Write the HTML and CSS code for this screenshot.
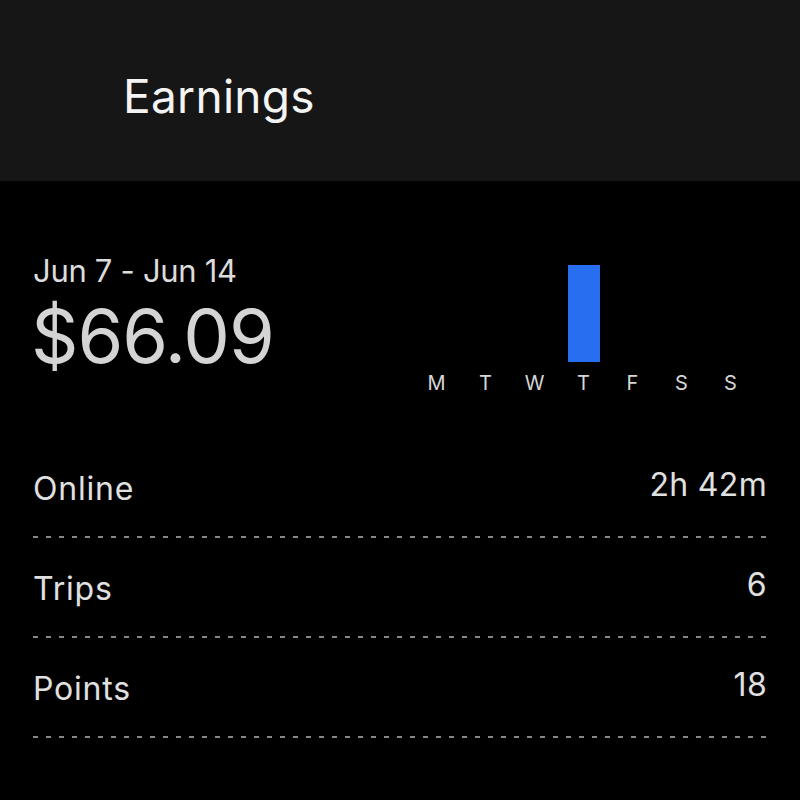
FILE: index.html
```html
<!DOCTYPE html>
<html lang="en">
<head>
  <meta charset="UTF-8" />
  <meta name="viewport" content="width=device-width, initial-scale=1.0"/>
  <title>Earnings</title>
  <link rel="stylesheet" href="styles.css">
</head>
<body>

<header class="top-bar">
  <h1>Earnings</h1>
</header>

<section class="summary">
  <div class="totals">
    <div class="range">Jun 7 - Jun 14</div>
    <div class="amount">$66.09</div>
  </div>

  <div class="week-chart">
    <div class="day"><div class="bar-slot"></div><span>M</span></div>
    <div class="day"><div class="bar-slot"></div><span>T</span></div>
    <div class="day"><div class="bar-slot"></div><span>W</span></div>
    <div class="day"><div class="bar-slot"><div class="bar" style="height: 97px"></div></div><span>T</span></div>
    <div class="day"><div class="bar-slot"></div><span>F</span></div>
    <div class="day"><div class="bar-slot"></div><span>S</span></div>
    <div class="day"><div class="bar-slot"></div><span>S</span></div>
  </div>
</section>

<ul class="stats">
  <li><span>Online</span><span class="value">2h 42m</span></li>
  <li><span>Trips</span><span class="value">6</span></li>
  <li><span>Points</span><span class="value">18</span></li>
</ul>

</body>
</html>
```

FILE: styles.css
```css
* { box-sizing: border-box; }

body {
  margin: 0;
  background: #000;
  color: #e2e2e2;
  font-family: Inter, "Open Sans", sans-serif;
}

.top-bar {
  height: 181px;
  background: #161616;
  display: flex;
  align-items: center;
  padding: 10px 0 0 123px;
}

.top-bar h1 {
  margin: 0;
  font-size: 46px;
  font-weight: 400;
  letter-spacing: 0.3px;
  color: #f4f4f4;
}

.summary {
  display: flex;
  justify-content: space-between;
  padding: 72px 45px 0 33px;
  height: 257px;
}

.range {
  font-size: 31px;
  line-height: 36px;
  letter-spacing: -0.3px;
  color: #dcdcdc;
}

.amount {
  font-size: 74px;
  line-height: 74px;
  letter-spacing: -1px;
  color: #d4d4d4;
  margin: 10px 0 0 -2px;
}

.week-chart {
  display: flex;
  padding-top: 12px;
}

.day {
  width: 49px;
  display: flex;
  flex-direction: column;
  align-items: center;
}

.bar-slot {
  height: 97px;
  width: 32px;
  display: flex;
  align-items: flex-end;
}

.bar {
  width: 32px;
  background: #276ef1;
}

.day span {
  margin-top: 9px;
  font-size: 20px;
  color: #d6d6d6;
}

.stats {
  list-style: none;
  margin: 0;
  padding: 0 33px;
}

.stats li {
  height: 100px;
  display: flex;
  justify-content: space-between;
  align-items: center;
  font-size: 32px;
  letter-spacing: 0.8px;
  color: #e0e0e0;
  background: repeating-linear-gradient(to right, #888 0 5px, transparent 5px 13px) left bottom / 100% 2px no-repeat;
}

.stats .value {
  margin-top: -8px;
  letter-spacing: 0.3px;
}
```
